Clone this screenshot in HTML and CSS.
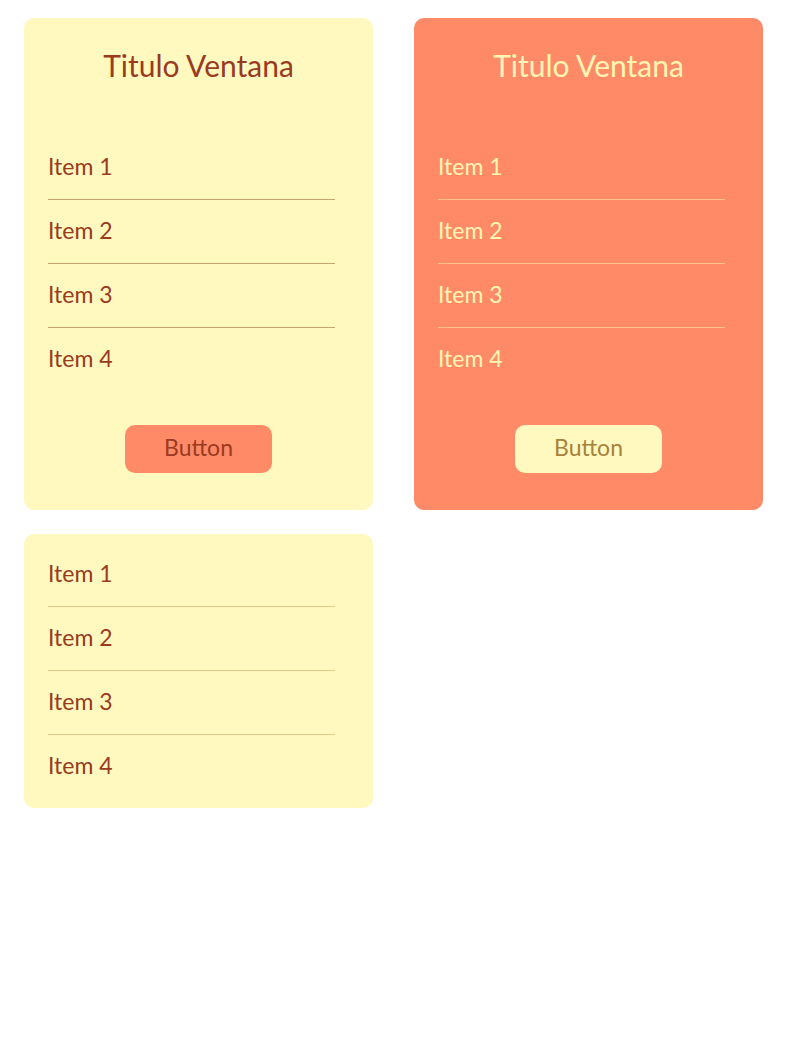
FILE: index.html
```html
<!DOCTYPE html>
<html lang="es">
<head>
<meta charset="utf-8">
<title>Ventanas</title>
<link rel="stylesheet" href="styles.css">
</head>
<body>
<main class="grid">
  <section class="card card-light">
    <h1 class="card-title">Titulo Ventana</h1>
    <ul class="list">
      <li class="list-item">Item 1</li>
      <li class="list-item">Item 2</li>
      <li class="list-item">Item 3</li>
      <li class="list-item">Item 4</li>
    </ul>
    <div class="actions"><button class="btn btn-orange">Button</button></div>
  </section>
  <section class="card card-orange">
    <h1 class="card-title">Titulo Ventana</h1>
    <ul class="list">
      <li class="list-item">Item 1</li>
      <li class="list-item">Item 2</li>
      <li class="list-item">Item 3</li>
      <li class="list-item">Item 4</li>
    </ul>
    <div class="actions"><button class="btn btn-light">Button</button></div>
  </section>
  <section class="card card-light card-list">
    <ul class="list list-soft">
      <li class="list-item">Item 1</li>
      <li class="list-item">Item 2</li>
      <li class="list-item">Item 3</li>
      <li class="list-item">Item 4</li>
    </ul>
  </section>
</main>
</body>
</html>
```

FILE: styles.css
```css
html, body {
  margin: 0;
  padding: 0;
  background: #ffffff;
}

body {
  font-family: Lato, "Open Sans", sans-serif;
}

.grid {
  display: grid;
  grid-template-columns: 349px 349px;
  column-gap: 41px;
  row-gap: 24px;
  padding: 18px 24px;
  align-items: start;
}

.card {
  border-radius: 10px;
  padding: 24px 24px 37px 24px;
}

.card-light {
  background: #fff9bf;
  color: #9a3a1f;
}

.card-orange {
  background: #ff8a68;
  color: #fff6b4;
}

.card-list {
  padding: 9px 24px 10px 24px;
}

.card-title {
  margin: 3px 0 51px 0;
  font-size: 30px;
  font-weight: 400;
  line-height: 40px;
  text-align: center;
}

.list {
  list-style: none;
  margin: 0;
  padding: 0;
  width: 287px;
}

.list-item {
  box-sizing: border-box;
  height: 64px;
  padding-bottom: 3px;
  display: flex;
  align-items: center;
  font-size: 23px;
  border-bottom: 1px solid #c9a26f;
}

.list-item:last-child {
  height: 63px;
  border-bottom: none;
}

.card-orange .list-item {
  border-bottom-color: #ffc08e;
}

.card-orange .list-item:last-child {
  border-bottom: none;
}

.list-soft .list-item {
  border-bottom-color: #e8c88f;
}

.list-soft .list-item:last-child {
  border-bottom: none;
}

.actions {
  display: flex;
  justify-content: center;
  margin-top: 34px;
}

.btn {
  box-sizing: border-box;
  width: 147px;
  height: 48px;
  border: none;
  border-radius: 10px;
  font-family: inherit;
  font-size: 23px;
  padding: 0 0 4px 0;
}

.btn-orange {
  background: #ff8a68;
  color: #9a3a1f;
}

.btn-light {
  background: #fff9bf;
  color: #a7823a;
}
```
